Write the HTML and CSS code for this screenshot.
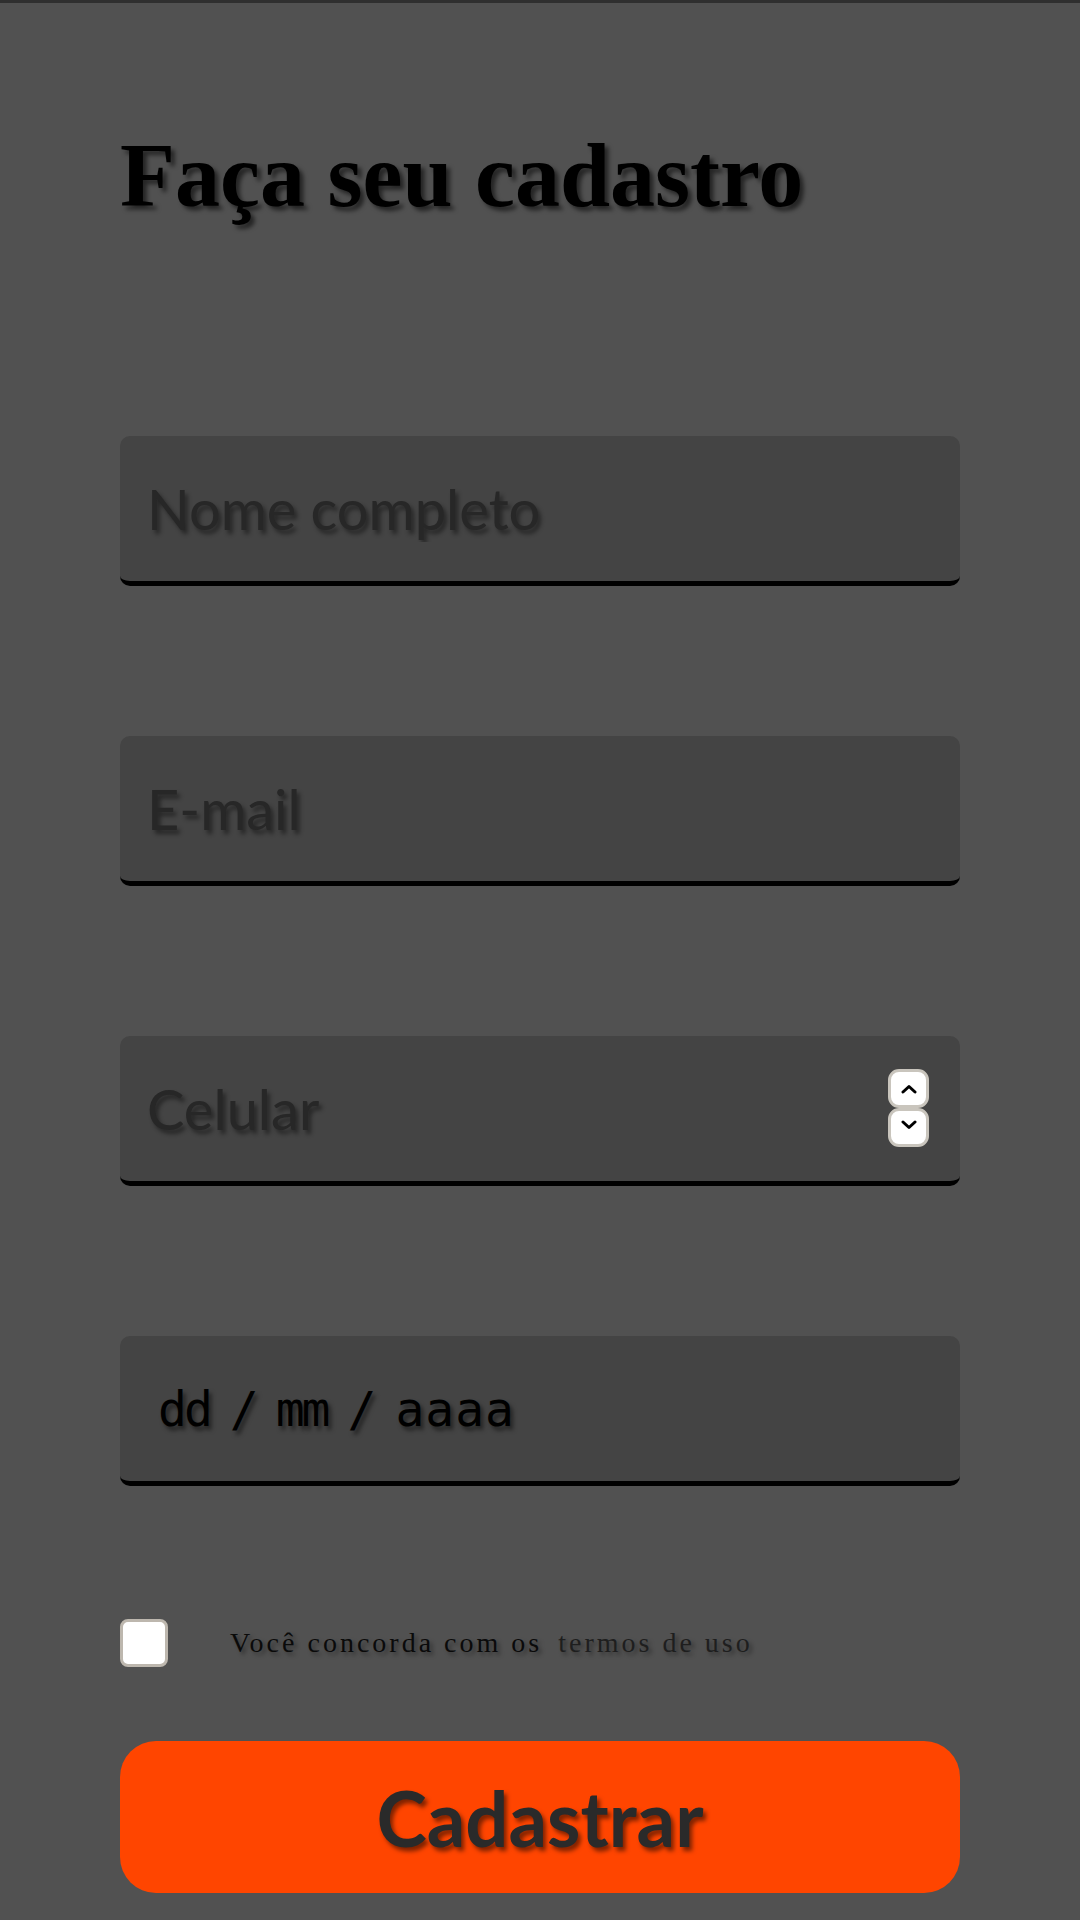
FILE: index.html
```html
<!DOCTYPE html>
<html lang="pt-BR">
<head>
<meta charset="utf-8">
<title>Cadastro</title>
<link rel="stylesheet" href="styles.css">
</head>
<body>
<main class="page">
  <h1 class="title">Faça seu cadastro</h1>
  <form class="form">
    <input class="field" type="text" placeholder="Nome completo">
    <input class="field" type="email" placeholder="E-mail">
    <div class="field-wrap">
      <input class="field" type="text" placeholder="Celular">
      <div class="spinner" aria-hidden="true">
        <span class="spin-btn spin-up"><svg width="18" height="10" viewBox="0 0 18 10"><path d="M3 8 L9 2.5 L15 8" fill="none" stroke="#000" stroke-width="3" stroke-linecap="round" stroke-linejoin="round"/></svg></span>
        <span class="spin-btn spin-down"><svg width="18" height="10" viewBox="0 0 18 10"><path d="M3 2 L9 7.5 L15 2" fill="none" stroke="#000" stroke-width="3" stroke-linecap="round" stroke-linejoin="round"/></svg></span>
      </div>
    </div>
    <div class="date-field" role="textbox" aria-label="Data de nascimento">
      <span class="date-seg">dd</span><span class="date-sep">/</span><span class="date-seg">mm</span><span class="date-sep">/</span><span class="date-seg date-year">aaaa</span>
    </div>
    <label class="terms">
      <input class="check" type="checkbox">
      <span class="terms-text">Você concorda com os <span class="terms-link">termos de uso</span></span>
    </label>
    <button class="submit" type="button">Cadastrar</button>
  </form>
</main>
</body>
</html>
```

FILE: styles.css
```css
html, body {
  margin: 0;
  padding: 0;
}

body {
  background: #515151;
  border-top: 3px solid #2f2f2f;
  min-height: 1917px;
}

.page {
  padding: 0 120px;
  display: flex;
  flex-direction: column;
}

.title {
  margin: 128px 0 0;
  font-family: "Liberation Serif", "Times New Roman", serif;
  font-weight: 700;
  font-size: 90px;
  line-height: 1;
  color: #000;
  text-shadow: 4px 4px 4px rgba(0, 0, 0, 0.55);
}

.form {
  margin-top: 215px;
  width: 840px;
  display: flex;
  flex-direction: column;
}

.field,
.date-field {
  box-sizing: border-box;
  width: 840px;
  height: 150px;
  margin: 0 0 150px;
  padding: 0 27px;
  border: none;
  border-bottom: 5px solid #000;
  border-radius: 10px;
  background: #444444;
  font-family: Lato, "Noto Sans", sans-serif;
  font-size: 56px;
  color: #272727;
  outline: none;
  display: block;
}

.field::placeholder {
  color: #272727;
  opacity: 1;
  text-shadow: 3px 4px 4px rgba(0, 0, 0, 0.45);
}

.field-wrap {
  position: relative;
}

.spinner {
  position: absolute;
  right: 31px;
  top: 33px;
  display: flex;
  flex-direction: column;
}

.spin-btn {
  box-sizing: border-box;
  width: 41px;
  height: 39px;
  border: 3px solid #c9c5bd;
  border-radius: 11px;
  background: #fff;
  display: flex;
  align-items: center;
  justify-content: center;
}

.spin-up {
  padding-top: 1px;
}

.spin-down {
  padding-bottom: 6px;
}

.date-field {
  display: flex;
  align-items: center;
  margin-bottom: 133px;
  padding: 0 38px;
  font-family: "DejaVu Sans Mono", "Liberation Mono", monospace;
  font-size: 48px;
  color: #000;
  text-shadow: 3px 4px 4px rgba(0, 0, 0, 0.5);
  white-space: nowrap;
}

.date-seg {
  letter-spacing: -3px;
}

.date-year {
  letter-spacing: 1px;
}

.date-sep {
  margin: 0 17px 0 20px;
}

.date-sep + .date-seg.date-year {
  margin-left: 2px;
}

.terms {
  display: flex;
  align-items: center;
  height: 48px;
}

.check {
  appearance: none;
  -webkit-appearance: none;
  box-sizing: border-box;
  width: 48px;
  height: 48px;
  margin: 0 62px 0 0;
  border: 3px solid #bdb7ae;
  border-radius: 8px;
  background: #fff;
  flex: none;
}

.terms-text {
  font-family: "Liberation Serif", "Times New Roman", serif;
  font-size: 28px;
  letter-spacing: 3px;
  color: #0a0a0a;
  text-shadow: 3px 3px 4px rgba(0, 0, 0, 0.4);
}

.terms-link {
  margin-left: 6px;
  color: #1e1e1e;
}

.submit {
  margin-top: 74px;
  width: 840px;
  height: 152px;
  border: none;
  border-radius: 36px;
  background: #ff4500;
  font-family: Lato, "Noto Sans", sans-serif;
  font-weight: 700;
  font-size: 76px;
  color: #2a2a2a;
  text-shadow: 3px 4px 4px rgba(0, 0, 0, 0.5);
  padding: 0;
}
```
